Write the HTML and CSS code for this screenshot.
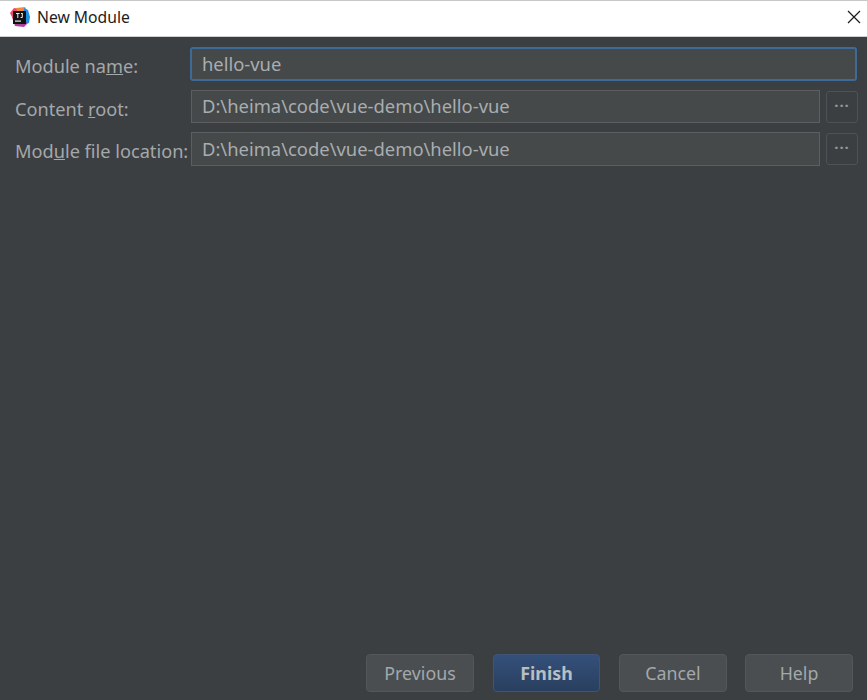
FILE: index.html
```html
<!DOCTYPE html>
<html lang="en">
<head>
<meta charset="utf-8">
<title>New Module</title>
<link rel="stylesheet" href="styles.css">
</head>
<body>
<div class="dialog">
  <header class="titlebar">
    <svg class="app-icon" width="20" height="20" viewBox="0 0 20 20" aria-hidden="true">
      <path d="M0 6 L4 1 L10 2 L9 9 L3 12 Z" fill="#f0476c"/>
      <path d="M6 1 L15 0 L17 4 L8 6 Z" fill="#f28a3c"/>
      <path d="M14 1 L18 3 L20 10 L19 16 L13 17 Z" fill="#1f8fe8"/>
      <path d="M2 10 L5 19 L14 20 L18 16 L10 13 Z" fill="#b0409c"/>
      <rect x="3" y="4" width="13" height="13" fill="#111"/>
      <rect x="5" y="13.5" width="6" height="1.2" fill="#eee"/>
      <path d="M6 6h3.6v.9h-1.3v4h-1v-4h-1.300z M11 6h1.800v3.900c0 1-1 1.300-2.200 1v-.9c.8.200 1.200.100 1.200-.300v-2.800h-.8z" fill="#eee"/>
    </svg>
    <span class="title">New Module</span>
    <svg class="close" width="14" height="14" viewBox="0 0 14 14" aria-hidden="true">
      <path d="M1 1 L13 13 M13 1 L1 13" stroke="#1a1a1a" stroke-width="1.2" fill="none"/>
    </svg>
  </header>
  <main class="content">
    <div class="form">
      <label class="label">Module na<u>m</u>e:</label>
      <div class="field field-focus">hello-vue</div>
      <label class="label">Content <u>r</u>oot:</label>
      <div class="field">D:\heima\code\vue-demo\hello-vue</div>
      <button class="browse">&middot;&middot;&middot;</button>
      <label class="label">Mod<u>u</u>le file location:</label>
      <div class="field">D:\heima\code\vue-demo\hello-vue</div>
      <button class="browse">&middot;&middot;&middot;</button>
    </div>
  </main>
  <footer class="actions">
    <button class="btn">Previous</button>
    <button class="btn btn-primary">Finish</button>
    <button class="btn">Cancel</button>
    <button class="btn">Help</button>
  </footer>
</div>
</body>
</html>
```
FILE: styles.css
```css
* { box-sizing: border-box; }
html, body { margin: 0; padding: 0; }
body { font-family: "Noto Sans", "Open Sans", sans-serif; background: #3c3f41; }
.dialog { width: 867px; height: 700px; display: flex; flex-direction: column; background: #3c3f41; }
.titlebar {
  height: 37px; flex: none; display: flex; align-items: center;
  padding: 0 6px 4px 10px; background: #fff;
  border-top: 1px solid #c8c8c8; border-bottom: 1px solid #d0d0d0;
}
.app-icon { flex: none; margin-right: 7px; }
.title { flex: 1; font-size: 15.7px; color: #1c1c1c; }
.content { flex: 1; padding: 10px 9px 0 15px; }
.form {
  display: grid; grid-template-columns: 175px 1fr 32px;
  grid-template-rows: 34px 33px 34px; row-gap: 9px; align-items: center;
}
.label { font-size: 18.2px; color: #a4a8ab; white-space: nowrap; position: relative; top: 2px; }
.field {
  height: 100%; margin-left: 1px; margin-right: 6px; padding: 0 10px 2px;
  display: flex; align-items: center;
  background: #45494a; border: 1px solid #5c5e5f;
  font-size: 18.4px; color: #a9adb0; white-space: nowrap;
}
.field-focus {
  grid-column: 2 / 4; margin: 0 1px 0 0; padding-left: 10px;
  border: 2px solid #3d6a96; border-radius: 3px;
}
.browse {
  width: 32px; height: 32px; padding: 0 0 4px; margin: 0;
  background: #3c3f41; border: 1px solid #4e5254; border-radius: 3px;
  color: #94989b; font: 700 15px "Noto Sans", sans-serif; letter-spacing: 1px;
}
.actions { flex: none; display: flex; justify-content: flex-end; gap: 19px; padding: 0 14px 8px 0; }
.btn {
  width: 108px; height: 38px; padding: 0;
  background: #4a4e50; border: 1px solid #535759; border-radius: 4px;
  color: #a3a8ab; font: 400 17.8px "Noto Sans", sans-serif;
}
.btn:last-child { margin-left: -1px; }
.btn-primary {
  width: 107px;
  background: linear-gradient(#34507a, #293f5f); border-color: #3f5573;
  color: #b9bec2; font-weight: 700;
}
```
